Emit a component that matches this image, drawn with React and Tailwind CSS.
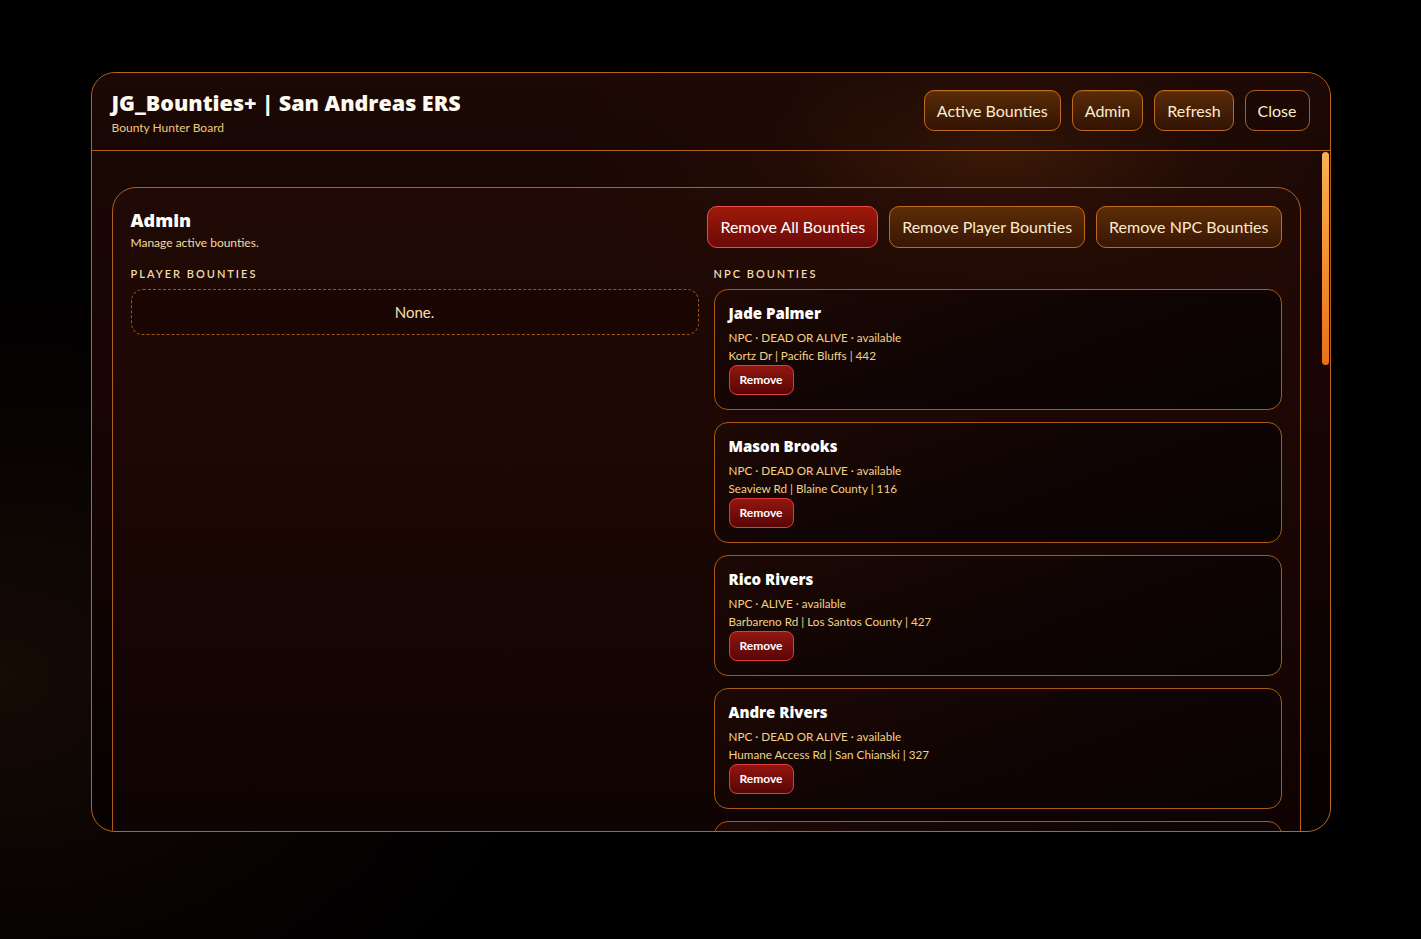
import React from 'react';

const npcBounties = [
  { name: 'Jade Palmer', type: 'DEAD OR ALIVE', loc: 'Kortz Dr | Pacific Bluffs | 442' },
  { name: 'Mason Brooks', type: 'DEAD OR ALIVE', loc: 'Seaview Rd | Blaine County | 116' },
  { name: 'Rico Rivers', type: 'ALIVE', loc: 'Barbareno Rd | Los Santos County | 427' },
  { name: 'Andre Rivers', type: 'DEAD OR ALIVE', loc: 'Humane Access Rd | San Chianski | 327' },
  { name: 'Tyler Grant', type: 'ALIVE', loc: 'Great Ocean Hwy | Paleto Bay | 901' },
];

const heading = { fontFamily: '"Open Sans", "Noto Sans", sans-serif' };

const headerBtn =
  'h-[41px] px-[12px] rounded-[10px] border border-[#c06a1c] text-[16px] text-[#fdeccb] bg-[linear-gradient(180deg,#5a2b07,#311304)] shadow-[inset_0_1px_0_rgba(255,170,80,0.12)]';

const NpcCard = ({ bounty }) => (
  <div className="rounded-[14px] border border-[#a95a14] bg-[linear-gradient(160deg,#1d0905_0%,#0e0403_55%,#090302_100%)] px-[14px] pt-[13px] pb-[14px]">
    <div className="text-[15px] font-extrabold leading-[20px] text-white" style={heading}>
      {bounty.name}
    </div>
    <div className="mt-[5px] text-[11.7px] leading-[18px] text-[#f4d189]">NPC · {bounty.type} · available</div>
    <div className="text-[11.7px] leading-[18px] text-[#f4d189]">{bounty.loc}</div>
    <button className="mt-[1px] h-[30px] px-[10px] rounded-[8px] border border-[#e03c3c] bg-[linear-gradient(180deg,#921610,#580606)] text-[12px] font-bold text-white">
      Remove
    </button>
  </div>
);

export default function App() {
  return (
    <div
      className="w-full h-[939px] overflow-hidden flex justify-center pt-[72px] bg-[radial-gradient(ellipse_40%_45%_at_0%_72%,#160b05_0%,#070302_60%,#000_100%)]"
      style={{ fontFamily: 'Lato, "Noto Sans", sans-serif' }}
    >
      <div className="w-[1240px] h-[760px] rounded-[24px] border border-[#b9651c] overflow-hidden flex flex-col bg-[radial-gradient(ellipse_35%_30%_at_73%_8%,#3e1b07_0%,rgba(40,14,5,0.6)_50%,transparent_100%),linear-gradient(180deg,#1a0805_0%,#180504_45%,#0b0202_85%,#060101_100%)]">
        {/* header */}
        <div className="h-[78px] shrink-0 flex items-center justify-between px-5 border-b border-[#b0601a] bg-[linear-gradient(180deg,rgba(28,9,5,0.7),rgba(20,6,3,0.3))]">
          <div className="pt-[2px]">
            <div className="text-[21.5px] font-extrabold leading-[28px] text-[#fffaf0]" style={heading}>
              JG_Bounties+ | San Andreas ERS
            </div>
            <div className="mt-[3px] text-[12px] leading-[16px] text-[#f2c77a]">Bounty Hunter Board</div>
          </div>
          <div className="flex gap-[11px] mb-[2px]">
            <button className={headerBtn}>Active Bounties</button>
            <button className={headerBtn}>Admin</button>
            <button className={headerBtn}>Refresh</button>
            <button className="h-[41px] px-[12px] rounded-[10px] border border-[#b0601a] text-[16px] text-[#fdeccb] bg-[#1b0804]">
              Close
            </button>
          </div>
        </div>

        {/* body */}
        <div className="flex-1 min-h-0 flex">
          <div className="flex-1 overflow-hidden pl-5 pr-[21px] pt-[36px]">
            <div className="rounded-[24px] border border-[#b0601a] px-[18px] pt-[18px] pb-[20px] bg-[linear-gradient(180deg,rgba(38,12,5,0.55),rgba(24,5,3,0.35))]">
              <div className="flex justify-between items-start">
                <div className="pt-[2px]">
                  <div className="text-[18px] font-extrabold leading-[24px] text-white" style={heading}>
                    Admin
                  </div>
                  <div className="mt-[3px] text-[12px] leading-[16px] text-[#f6dca2]">Manage active bounties.</div>
                </div>
                <div className="flex gap-[11px]">
                  <button className="h-[42px] px-[12px] rounded-[10px] border border-[#e84c4c] bg-[linear-gradient(180deg,#9e1a0a,#6a0a08)] text-[16px] text-white">
                    Remove All Bounties
                  </button>
                  <button className="h-[42px] px-[12px] rounded-[10px] border border-[#c06a1c] bg-[linear-gradient(180deg,#5c2d07,#381604)] text-[16px] text-[#fdeccb]">
                    Remove Player Bounties
                  </button>
                  <button className="h-[42px] px-[12px] rounded-[10px] border border-[#c06a1c] bg-[linear-gradient(180deg,#5c2d07,#381604)] text-[16px] text-[#fdeccb]">
                    Remove NPC Bounties
                  </button>
                </div>
              </div>

              <div className="mt-[16px] grid grid-cols-2 gap-[15px]">
                <div>
                  <div className="text-[11px] leading-[14px] tracking-[2px] text-[#f3dcae] font-semibold">PLAYER BOUNTIES</div>
                  <div className="mt-[8px] h-[46px] rounded-[12px] border border-dashed border-[#9c5418] flex items-center justify-center text-[15px] text-[#f7e0b0] bg-[rgba(20,4,2,0.45)]">
                    None.
                  </div>
                </div>
                <div>
                  <div className="text-[11px] leading-[14px] tracking-[2px] text-[#f3dcae] font-semibold">NPC BOUNTIES</div>
                  <div className="mt-[8px] flex flex-col gap-[12px]">
                    {npcBounties.map((b) => (
                      <NpcCard key={b.name} bounty={b} />
                    ))}
                  </div>
                </div>
              </div>
            </div>
          </div>
          {/* scrollbar */}
          <div className="w-[8px] shrink-0 pt-[1px]">
            <div className="h-[213px] w-[7px] rounded-full bg-[linear-gradient(180deg,#f9b152,#ef8a2c_60%,#e8701a)]" />
          </div>
        </div>
      </div>
    </div>
  );
}
